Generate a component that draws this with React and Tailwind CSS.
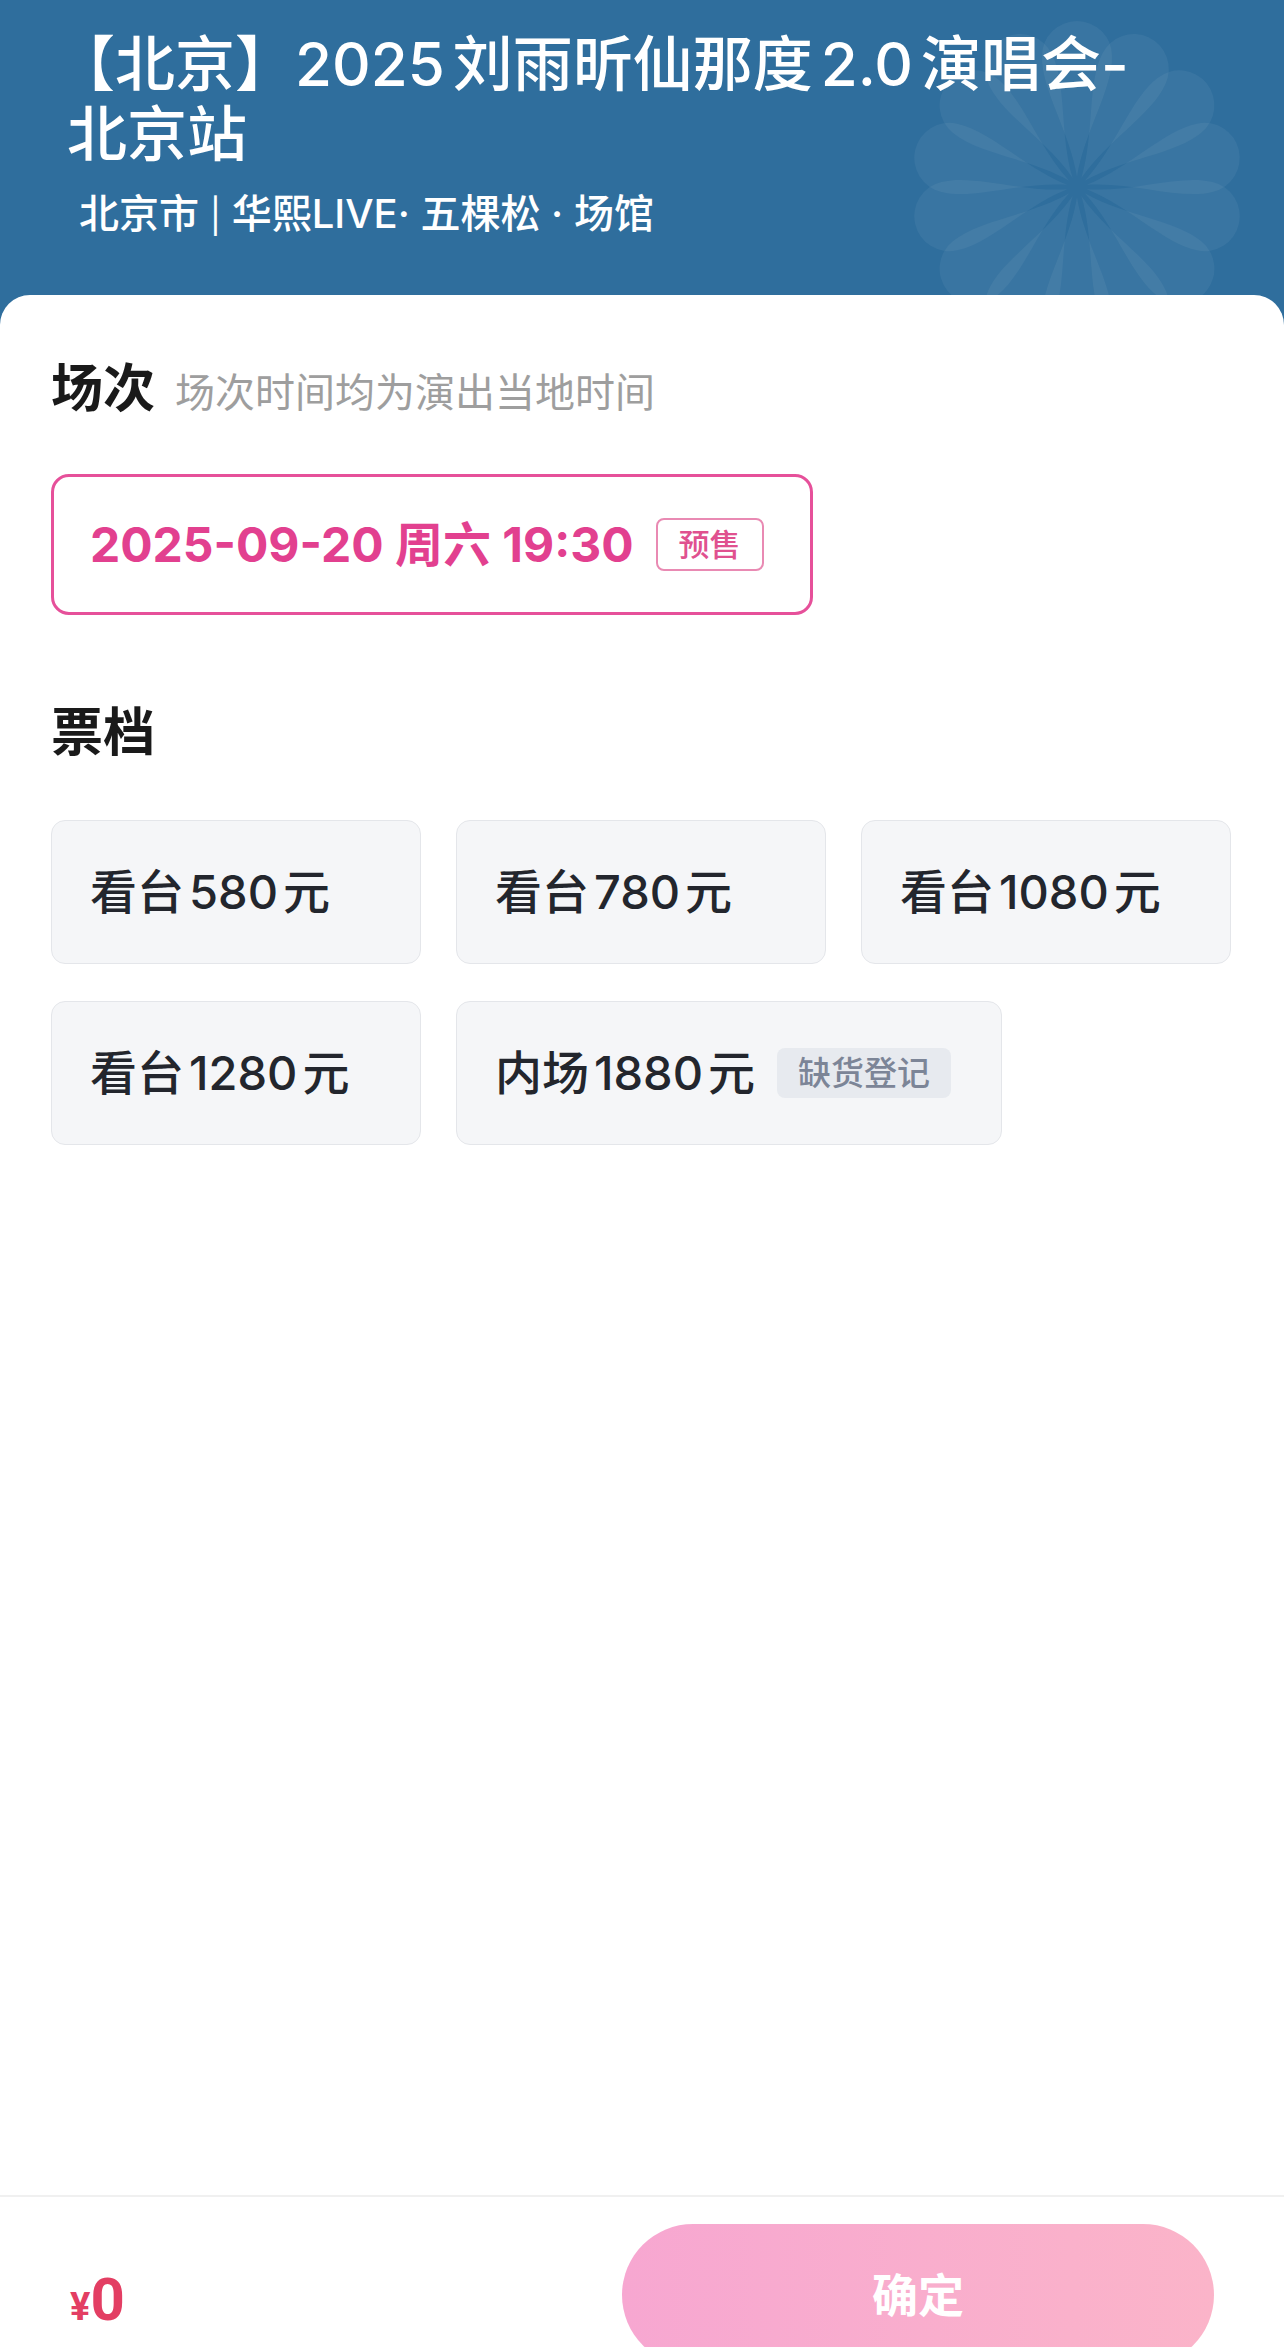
import React from "react";

const petals = Array.from({ length: 14 }, (_, i) => i * (360 / 14));

function Flower() {
  return (
    <svg
      className="absolute left-[877px] top-[-13px]"
      width="400"
      height="400"
      viewBox="-200 -200 400 400"
    >
      {petals.map((a) => (
        <path
          key={a}
          d="M0,-10 C-7,-55 -36,-98 -35,-131 A35,35 0 0 1 35,-131 C36,-98 7,-55 0,-10 Z"
          transform={`rotate(${a})`}
          fill="#ffffff"
          fillOpacity="0.05"
        />
      ))}
    </svg>
  );
}

function Ticket({ name, price, extra, wide }) {
  return (
    <div
      className={
        wide
          ? "h-[144px] min-w-[370px] pl-[38px] pr-[50px] rounded-[14px] bg-[#f5f6f8] border border-[#e4e6ea] flex items-center"
          : "h-[144px] min-w-[370px] px-[38px] rounded-[14px] bg-[#f5f6f8] border border-[#e4e6ea] flex items-center"
      }
    >
      <span className="text-[47px] leading-[56px] font-medium text-[#23262d]">
        {name}
        <span className="mx-[5px]">{price}</span>元
      </span>
      {extra ? (
        <span className="ml-[22px] h-[50px] px-[21px] rounded-[8px] bg-[#e7eaef] text-[#7c8597] text-[33px] leading-[50px] font-medium">
          {extra}
        </span>
      ) : null}
    </div>
  );
}

export default function App() {
  return (
    <div className="w-[1284px] h-[2347px] overflow-hidden bg-[#2f6e9d] flex flex-col font-['Inter','Noto_Sans_CJK_SC',sans-serif]">
      <header className="relative h-[295px] shrink-0 overflow-hidden">
        <Flower />
        <div className="relative pl-[67px] pt-[29px]">
          <h1 className="text-[60px] leading-[70px] font-medium text-white">
            <span className="ml-[-12px]">【北京】</span>
            <span className="mr-[8px]">2025</span>刘雨昕仙那度
            <span className="mx-[8px]">2.0</span>演唱会-
            <br />
            北京站
          </h1>
          <p className="mt-[20px] pl-[12px] text-[40px] leading-[50px] font-medium text-white">
            北京市 <span className="font-normal text-[34px]">|</span> 华熙LIVE· 五棵松 · 场馆
          </p>
        </div>
      </header>

      <main className="flex-1 bg-white rounded-t-[30px] flex flex-col">
        <div className="px-[51px] pt-[64px]">
          <div className="flex items-baseline gap-[20px]">
            <h2 className="text-[52px] leading-[60px] font-bold text-[#1a1a1a]">场次</h2>
            <span className="text-[40px] leading-[60px] text-[#9e9e9e]">场次时间均为演出当地时间</span>
          </div>

          <div className="mt-[51px] w-[762px] h-[141px] border-[3px] border-[#e6509a] rounded-[18px] pl-[36px] flex items-center">
            <span className="text-[48px] leading-[60px] font-bold text-[#e2408f]">2025-09-20 周六 19:30</span>
            <span className="ml-[22px] h-[53px] px-[21px] border-2 border-[#e98ab3] rounded-[8px] text-[31px] leading-[49px] font-medium text-[#e0518f]">
              预售
            </span>
          </div>

          <h2 className="mt-[88px] text-[52px] leading-[60px] font-bold text-[#1a1a1a]">票档</h2>

          <div className="mt-[57px] flex flex-wrap gap-x-[35px] gap-y-[37px]">
            <Ticket name="看台" price="580" />
            <Ticket name="看台" price="780" />
            <Ticket name="看台" price="1080" />
            <Ticket name="看台" price="1280" />
            <Ticket name="内场" price="1880" extra="缺货登记" wide />
          </div>
        </div>

        <footer className="mt-auto h-[152px] shrink-0 border-t-2 border-[#f0f0f0] flex justify-between items-start pl-[70px] pr-[70px]">
          <div className="mt-[73px] flex items-baseline text-[#e33e63] font-['Roboto',sans-serif] font-bold">
            <span className="text-[38px] leading-none">¥</span>
            <span className="text-[60px] leading-none">0</span>
          </div>
          <button className="mt-[27px] w-[592px] h-[142px] rounded-full bg-gradient-to-r from-[#f7a7d1] to-[#fbb4c9] text-white text-[46px] font-semibold flex items-center justify-center">
            确定
          </button>
        </footer>
      </main>
    </div>
  );
}
